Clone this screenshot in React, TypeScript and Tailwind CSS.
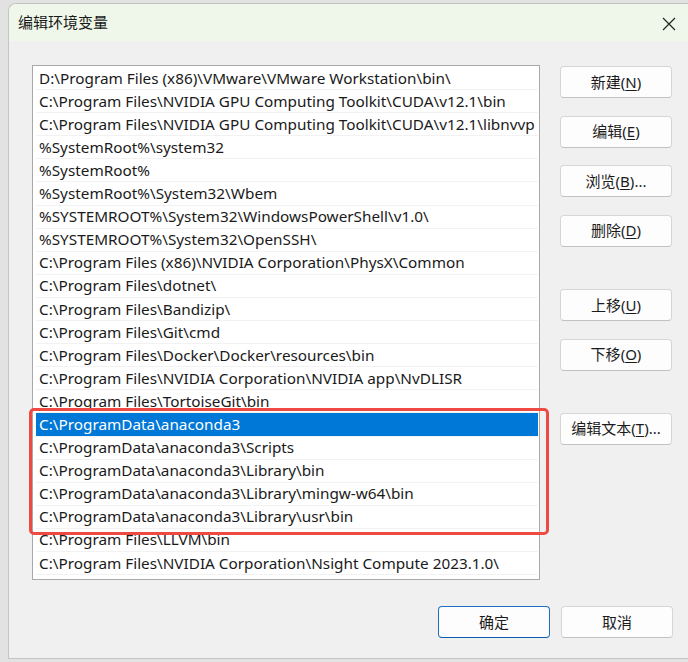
import React from 'react'

const PATHS = [
  'D:\\Program Files (x86)\\VMware\\VMware Workstation\\bin\\',
  'C:\\Program Files\\NVIDIA GPU Computing Toolkit\\CUDA\\v12.1\\bin',
  'C:\\Program Files\\NVIDIA GPU Computing Toolkit\\CUDA\\v12.1\\libnvvp',
  '%SystemRoot%\\system32',
  '%SystemRoot%',
  '%SystemRoot%\\System32\\Wbem',
  '%SYSTEMROOT%\\System32\\WindowsPowerShell\\v1.0\\',
  '%SYSTEMROOT%\\System32\\OpenSSH\\',
  'C:\\Program Files (x86)\\NVIDIA Corporation\\PhysX\\Common',
  'C:\\Program Files\\dotnet\\',
  'C:\\Program Files\\Bandizip\\',
  'C:\\Program Files\\Git\\cmd',
  'C:\\Program Files\\Docker\\Docker\\resources\\bin',
  'C:\\Program Files\\NVIDIA Corporation\\NVIDIA app\\NvDLISR',
  'C:\\Program Files\\TortoiseGit\\bin',
  'C:\\ProgramData\\anaconda3',
  'C:\\ProgramData\\anaconda3\\Scripts',
  'C:\\ProgramData\\anaconda3\\Library\\bin',
  'C:\\ProgramData\\anaconda3\\Library\\mingw-w64\\bin',
  'C:\\ProgramData\\anaconda3\\Library\\usr\\bin',
  'C:\\Program Files\\LLVM\\bin',
  'C:\\Program Files\\NVIDIA Corporation\\Nsight Compute 2023.1.0\\',
]

const SELECTED = 15

function Btn({ label, hot, rest, className = '', primary = false }: { label: string; hot: string; rest?: string; className?: string; primary?: boolean }) {
  return (
    <button
      className={
        'w-[112px] h-[32px] rounded-[4px] flex items-center justify-center text-[15px] text-[#1b1b1b] ' +
        (primary
          ? 'bg-[#fdfdfd] border border-[#1f6fc5] border-b-[#0b5cad]'
          : 'bg-[#fdfdfd] border border-[#d6d6d6] border-b-[#c2c2c2]') +
        ' ' + className
      }
    >
      {label}
      {hot && (
        <>
          (<span className="underline underline-offset-2">{hot}</span>){rest}
        </>
      )}
    </button>
  )
}

export default function App() {
  return (
    <div
      className="w-[688px] h-[662px] bg-[#e2e2e2] pl-[8px] pt-[3px] overflow-hidden"
      style={{ fontFamily: '"Noto Sans", "Noto Sans CJK SC", sans-serif' }}
    >
      <div className="relative h-[656px] w-[690px] rounded-tl-[8px] bg-[#f0f0f0] border-l border-t border-b border-[#c4c4c4] flex flex-col overflow-hidden">
        {/* Title bar */}
        <div className="h-[37px] bg-[#eef7e9] flex items-center justify-between pl-[9px] pr-[22px] shrink-0">
          <span className="text-[15px] text-[#1a1a1a]">编辑环境变量</span>
          <svg width="14" height="14" viewBox="0 0 14 14" className="mt-[2px]">
            <path d="M1 1 L13 13 M13 1 L1 13" stroke="#222" strokeWidth="1.2" />
          </svg>
        </div>

        {/* Body */}
        <div className="pl-[23px] pt-[24px] flex flex-col">
          <div className="flex">
            {/* List */}
            <div className="relative w-[508px] h-[515px] bg-white border border-[#a9a9a9]">
              <div className="pt-[1px] pl-[3px] pr-[1px]">
                {PATHS.map((p, i) => (
                  <div
                    key={i}
                    className={
                      'h-[23.1px] flex items-center pl-[3px] text-[15.3px] whitespace-nowrap overflow-hidden border-b border-[#f2f2f2] ' +
                      (i === SELECTED ? 'bg-[#0078d7] text-white' : 'text-[#1a1a1a]')
                    }
                  >
                    {p}
                  </div>
                ))}
              </div>
              {/* highlight */}
              <div className="absolute left-[-4px] top-[342px] w-[520px] h-[127px] border-[3.5px] border-[#ec4a43] rounded-[5px] pointer-events-none" />
            </div>

            {/* Side buttons */}
            <div className="ml-[20px] flex flex-col">
              <Btn label="新建" hot="N" className="mt-[1px]" />
              <Btn label="编辑" hot="E" className="mt-[17.5px]" />
              <Btn label="浏览" hot="B" rest="..." className="mt-[17.5px]" />
              <Btn label="删除" hot="D" className="mt-[17.5px]" />
              <Btn label="上移" hot="U" className="mt-[42.5px]" />
              <Btn label="下移" hot="O" className="mt-[17.5px]" />
              <Btn label="编辑文本" hot="T" rest="..." className="mt-[42px]" />
            </div>
          </div>

          {/* Bottom buttons */}
          <div className="w-[641px] mt-[26px] flex justify-end gap-[11px]">
            <Btn label="确定" hot="" primary />
            <Btn label="取消" hot="" />
          </div>
        </div>
      </div>
    </div>
  )
}
